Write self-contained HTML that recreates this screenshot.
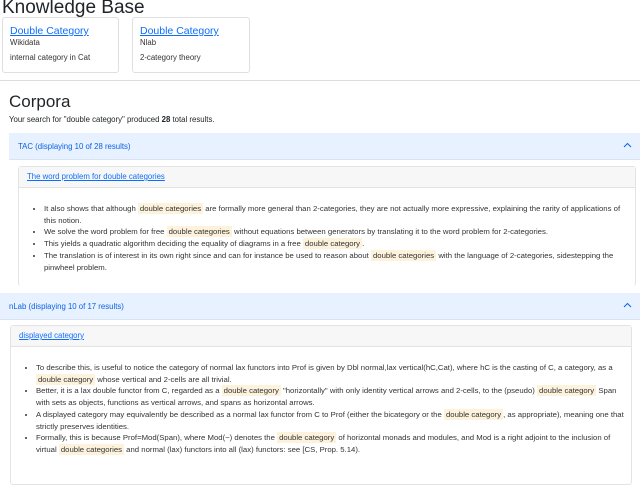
<!DOCTYPE html>
<html><head><style>
*{box-sizing:border-box}
body{margin:0;width:640px;height:476px;overflow:hidden;background:#fff;font-family:"Liberation Sans",sans-serif;color:#212529;position:relative}
.abs{position:absolute}
h1{position:absolute;margin:0;font-weight:500;font-size:19px;left:2px;top:-3px}
.card{position:absolute;top:17px;height:56px;border:1px solid #dfdfdf;border-radius:3px;padding:7px 7px}
.card a{color:#0d6efd;font-size:10.5px;text-decoration:underline;display:block;line-height:13px}
.card div{font-size:7.8px;line-height:10px;color:#333}
hr{position:absolute;top:80px;left:0;width:640px;margin:0;border:0;border-top:1px solid #ddd}
h2{position:absolute;margin:0;font-weight:500;font-size:17px;left:9px;top:92px}
.srch{left:9px;top:115px;font-size:7.8px}
.acc{position:absolute;left:9px;width:631px;height:27px;background:#e7f1ff;color:#0c63e4;font-size:7.8px;padding:9px 9px;border-bottom:1px solid #d6e4f5}
.chev{position:absolute;right:8px;top:9px;width:9px;height:6px}
.inner{position:absolute;left:18px;width:618px;border:1px solid #e3e3e3;border-radius:3px}
.ih{height:21px;background:#f7f7f7;border-bottom:1px solid #e3e3e3;padding:5px 8px;font-size:7.8px}
.ih a{color:#0d6efd;text-decoration:underline}
ul{margin:0;padding:0 6px 0 25px;font-size:7.75px;line-height:11.7px;color:#333}
mark{background:#fdf3dc;color:#333;padding:1px 2px}
</style></head><body>
<h1>Knowledge Base</h1>
<div class="card" style="left:2px;width:117px"><a>Double Category</a><div>Wikidata</div><div style="margin-top:5px">internal category in Cat</div></div>
<div class="card" style="left:132px;width:118px"><a>Double Category</a><div>Nlab</div><div style="margin-top:5px">2-category theory</div></div>
<hr>
<h2>Corpora</h2>
<div class="abs srch">Your search for "double category" produced <b>28</b> total results.</div>
<div class="acc" style="top:133px">TAC (displaying 10 of 28 results)<svg class="chev" viewBox="0 0 9 6"><path d="M1 5L4.5 1.5L8 5" fill="none" stroke="#0c63e4" stroke-width="1"/></svg></div>
<div class="inner" style="top:166px;height:120px;border-bottom:none">
<div class="ih"><a>The word problem for double categories</a></div>
<ul style="margin-top:15px">
<li>It also shows that although <mark>double categories</mark> are formally more general than 2-categories, they are not actually more expressive, explaining the rarity of applications of this notion.</li>
<li>We solve the word problem for free <mark>double categories</mark> without equations between generators by translating it to the word problem for 2-categories.</li>
<li>This yields a quadratic algorithm deciding the equality of diagrams in a free <mark>double category</mark>.</li>
<li>The translation is of interest in its own right since and can for instance be used to reason about <mark>double categories</mark> with the language of 2-categories, sidestepping the pinwheel problem.</li>
</ul></div>
<div class="acc" style="top:293px;left:0;width:640px">nLab (displaying 10 of 17 results)<svg class="chev" viewBox="0 0 9 6"><path d="M1 5L4.5 1.5L8 5" fill="none" stroke="#0c63e4" stroke-width="1"/></svg></div>
<div class="inner" style="top:325px;left:10px;width:622px;height:160px">
<div class="ih"><a>displayed category</a></div>
<ul style="margin-top:15px">
<li>To describe this, is useful to notice the category of normal lax functors into Prof is given by Dbl normal,lax vertical(hC,Cat), where hC is the casting of C, a category, as a <mark>double category</mark> whose vertical and 2-cells are all trivial.</li>
<li>Better, it is a lax double functor from C, regarded as a <mark>double category</mark> "horizontally" with only identity vertical arrows and 2-cells, to the (pseudo) <mark>double category</mark> Span with sets as objects, functions as vertical arrows, and spans as horizontal arrows.</li>
<li>A displayed category may equivalently be described as a normal lax functor from C to Prof (either the bicategory or the <mark>double category</mark>, as appropriate), meaning one that strictly preserves identities.</li>
<li>Formally, this is because Prof=Mod(Span), where Mod(−) denotes the <mark>double category</mark> of horizontal monads and modules, and Mod is a right adjoint to the inclusion of virtual <mark>double categories</mark> and normal (lax) functors into all (lax) functors: see [CS, Prop. 5.14).</li>
</ul></div>
</body></html>
